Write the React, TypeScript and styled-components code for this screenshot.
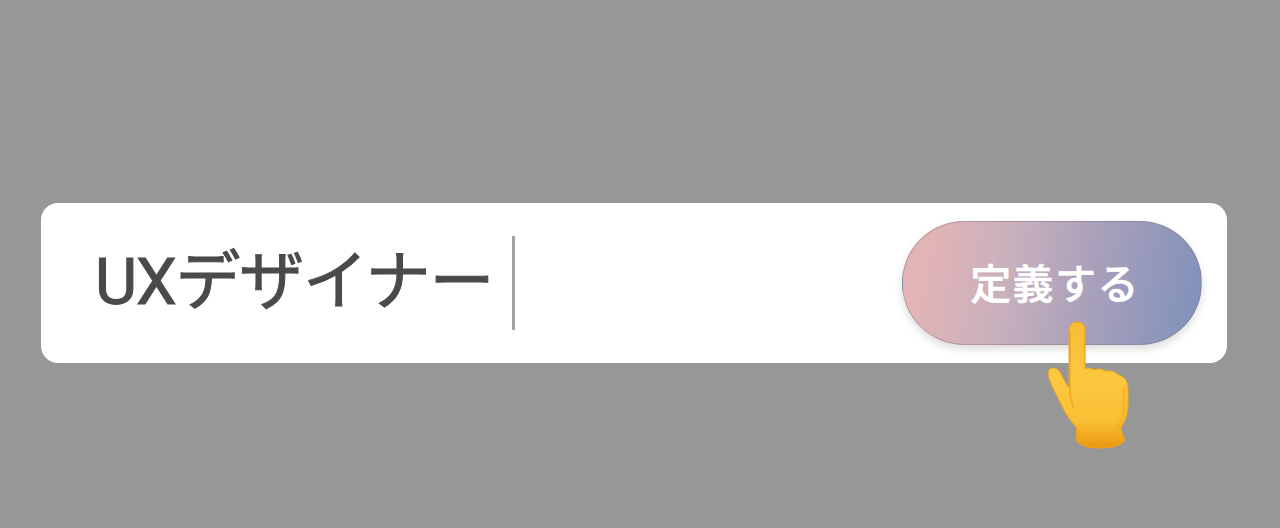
import React from 'react';
import styled, { createGlobalStyle } from 'styled-components';

const GlobalStyle = createGlobalStyle`
  html, body { margin: 0; padding: 0; background: #979797; }
`;

const Page = styled.div`
  width: 1280px;
  height: 528px;
  box-sizing: border-box;
  padding: 203px 53px 0 41px;
  background: #979797;
  overflow: hidden;
  font-family: Roboto, "Noto Sans CJK JP", "Noto Sans", sans-serif;
`;

const InputCard = styled.div`
  position: relative;
  height: 160px;
  background: #fff;
  border-radius: 17px;
  display: flex;
  align-items: center;
  justify-content: space-between;
  padding: 0 25px 0 54px;
`;

const Field = styled.div`
  display: flex;
  align-items: center;
  gap: 19px;
`;

const Value = styled.span`
  font-size: 65px;
  font-weight: 400;
  line-height: 94px;
  color: #4a4a4a;
  letter-spacing: -1.2px;
  -webkit-text-stroke: 1px #4a4a4a;
  transform: translateY(-1px);
`;

const Caret = styled.span`
  width: 3px;
  height: 94px;
  background: #a3a3a3;
`;

const DefineButton = styled.button`
  width: 300px;
  height: 124px;
  box-sizing: border-box;
  border: 1px solid rgba(125, 105, 120, 0.4);
  border-radius: 62px;
  background: linear-gradient(100deg, #e3b4b5 8%, #c9b0bd 35%, #a9a0ba 62%, #8493bb 95%);
  box-shadow: 0 4px 9px rgba(0, 0, 0, 0.14);
  color: #fff;
  font-family: inherit;
  font-size: 41px;
  font-weight: 500;
  -webkit-text-stroke: 0.5px #fff;
  letter-spacing: 1.4px;
  padding: 0 0 5px 6px;
`;

const Pointer = styled.svg`
  position: absolute;
  left: 999px;
  top: 115px;
  width: 96px;
  height: 136px;
`;

function HandIcon() {
  return (
    <Pointer viewBox="0 0 96 136" aria-hidden="true">
      <defs>
        <linearGradient id="handFill" x1="0" y1="0" x2="0" y2="1">
          <stop offset="0" stopColor="#f9bd36" />
          <stop offset="0.45" stopColor="#fcc83f" />
          <stop offset="0.78" stopColor="#f9bf34" />
          <stop offset="1" stopColor="#ea9812" />
        </linearGradient>
        <filter id="soft" x="-10%" y="-10%" width="120%" height="120%">
          <feGaussianBlur stdDeviation="0.7" />
        </filter>
      </defs>
      <g filter="url(#soft)">
        <path
          d="M29 13 C29 7 32 4 37 4 C42 4 45 7 45 13 L45 51 C48 49 51 50 54 52 C58 50 62 51 65 53 C70 52 75 54 79 57 C85 59 88 64 88 72 L88 86 C88 96 85 103 81 110 C81 114 83 118 85 122 C81 128 72 130 60 130 C48 130 40 128 36 122 C37 118 37 114 36 109 C31 103 26 97 22 88 C18 79 12 70 9 60 C7 54 9 50 13 50 C17 50 20 53 22 58 C24 62 26 66 29 70 Z"
          fill="url(#handFill)"
          stroke="#efa51f"
          strokeWidth="1"
        />
        <path d="M30 14 L30 72 C30 78 31 84 34 90" stroke="#e89a12" strokeWidth="1.6" fill="none" opacity="0.65" />
        <path d="M44.5 14 L45 52" stroke="#f2a91f" strokeWidth="1.2" fill="none" opacity="0.7" />
        <path d="M84 68 L84 90 C84 98 81 104 78 109" stroke="#f2a91f" strokeWidth="3" fill="none" opacity="0.5" />
      </g>
    </Pointer>
  );
}

export default function App() {
  return (
    <>
      <GlobalStyle />
      <Page>
        <InputCard>
          <Field>
            <Value>UXデザイナー</Value>
            <Caret />
          </Field>
          <DefineButton type="button">定義する</DefineButton>
          <HandIcon />
        </InputCard>
      </Page>
    </>
  );
}
